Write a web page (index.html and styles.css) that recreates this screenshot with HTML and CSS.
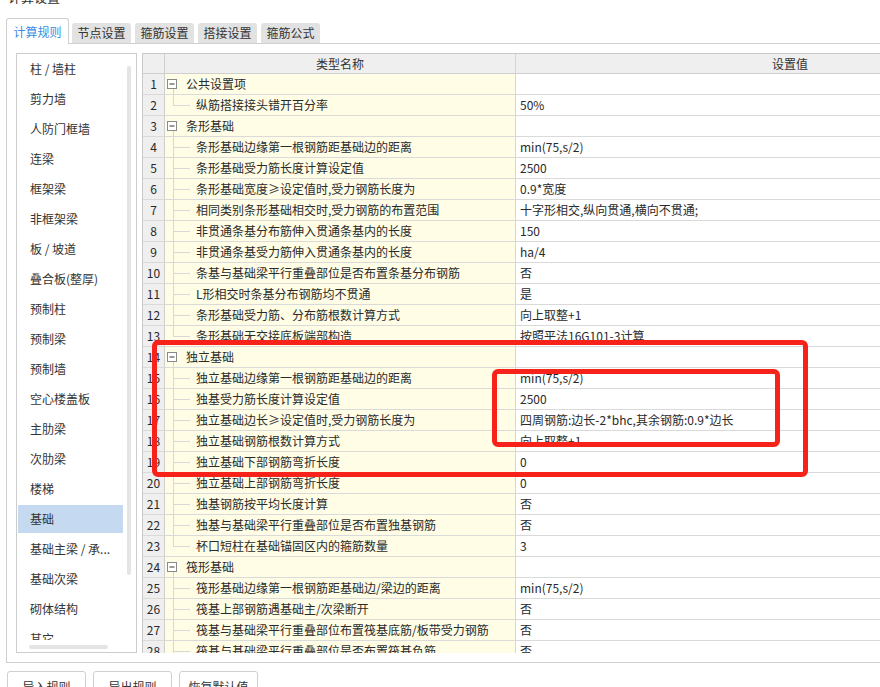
FILE: index.html
```html
<!DOCTYPE html>
<html lang="zh-CN">
<head>
<meta charset="utf-8">
<title>计算设置</title>
<link rel="stylesheet" href="styles.css">
</head>
<body>
<div class="title">计算设置</div>
<div class="tabs">
  <div class="tab active">计算规则</div>
  <div class="tab">节点设置</div>
  <div class="tab">箍筋设置</div>
  <div class="tab">搭接设置</div>
  <div class="tab">箍筋公式</div>
</div>
<div class="panel">
  <div class="listbox">
    <div class="list-main">
      <div class="items">
        <div class="item">柱 / 墙柱</div>
        <div class="item">剪力墙</div>
        <div class="item">人防门框墙</div>
        <div class="item">连梁</div>
        <div class="item">框架梁</div>
        <div class="item">非框架梁</div>
        <div class="item">板 / 坡道</div>
        <div class="item">叠合板(整厚)</div>
        <div class="item">预制柱</div>
        <div class="item">预制梁</div>
        <div class="item">预制墙</div>
        <div class="item">空心楼盖板</div>
        <div class="item">主肋梁</div>
        <div class="item">次肋梁</div>
        <div class="item">楼梯</div>
        <div class="item selected">基础</div>
        <div class="item">基础主梁 / 承...</div>
        <div class="item">基础次梁</div>
        <div class="item">砌体结构</div>
        <div class="item">其它</div>
      </div>
      <div class="vscroll"><div class="vthumb"></div></div>
    </div>
    <div class="hscroll"><div class="hthumb"></div></div>
  </div>
  <div class="grid">
    <div class="row head">
      <div class="c-num"></div>
      <div class="c-name center">类型名称</div>
      <div class="c-val center">设置值</div>
    </div>
    <div class="row"><div class="c-num">1</div><div class="c-name group"><svg class="box" width="10" height="10" viewBox="0 0 10 10"><rect x="0.5" y="0.5" width="9" height="9" fill="#fff" stroke="#8a8a8a"/><line x1="2.5" y1="5" x2="7.5" y2="5" stroke="#333"/></svg>公共设置项</div><div class="c-val"></div></div>
    <div class="row"><div class="c-num">2</div><div class="c-name child last">纵筋搭接接头错开百分率</div><div class="c-val">50%</div></div>
    <div class="row"><div class="c-num">3</div><div class="c-name group"><svg class="box" width="10" height="10" viewBox="0 0 10 10"><rect x="0.5" y="0.5" width="9" height="9" fill="#fff" stroke="#8a8a8a"/><line x1="2.5" y1="5" x2="7.5" y2="5" stroke="#333"/></svg>条形基础</div><div class="c-val"></div></div>
    <div class="row"><div class="c-num">4</div><div class="c-name child">条形基础边缘第一根钢筋距基础边的距离</div><div class="c-val">min(75,s/2)</div></div>
    <div class="row"><div class="c-num">5</div><div class="c-name child">条形基础受力筋长度计算设定值</div><div class="c-val">2500</div></div>
    <div class="row"><div class="c-num">6</div><div class="c-name child">条形基础宽度≥设定值时,受力钢筋长度为</div><div class="c-val">0.9*宽度</div></div>
    <div class="row"><div class="c-num">7</div><div class="c-name child">相同类别条形基础相交时,受力钢筋的布置范围</div><div class="c-val">十字形相交,纵向贯通,横向不贯通;</div></div>
    <div class="row"><div class="c-num">8</div><div class="c-name child">非贯通条基分布筋伸入贯通条基内的长度</div><div class="c-val">150</div></div>
    <div class="row"><div class="c-num">9</div><div class="c-name child">非贯通条基受力筋伸入贯通条基内的长度</div><div class="c-val">ha/4</div></div>
    <div class="row"><div class="c-num">10</div><div class="c-name child">条基与基础梁平行重叠部位是否布置条基分布钢筋</div><div class="c-val">否</div></div>
    <div class="row"><div class="c-num">11</div><div class="c-name child">L形相交时条基分布钢筋均不贯通</div><div class="c-val">是</div></div>
    <div class="row"><div class="c-num">12</div><div class="c-name child">条形基础受力筋、分布筋根数计算方式</div><div class="c-val">向上取整+1</div></div>
    <div class="row"><div class="c-num">13</div><div class="c-name child last">条形基础无交接底板端部构造</div><div class="c-val">按照平法16G101-3计算</div></div>
    <div class="row"><div class="c-num">14</div><div class="c-name group"><svg class="box" width="10" height="10" viewBox="0 0 10 10"><rect x="0.5" y="0.5" width="9" height="9" fill="#fff" stroke="#8a8a8a"/><line x1="2.5" y1="5" x2="7.5" y2="5" stroke="#333"/></svg>独立基础</div><div class="c-val"></div></div>
    <div class="row"><div class="c-num">15</div><div class="c-name child">独立基础边缘第一根钢筋距基础边的距离</div><div class="c-val">min(75,s/2)</div></div>
    <div class="row"><div class="c-num">16</div><div class="c-name child">独基受力筋长度计算设定值</div><div class="c-val">2500</div></div>
    <div class="row"><div class="c-num">17</div><div class="c-name child">独立基础边长≥设定值时,受力钢筋长度为</div><div class="c-val">四周钢筋:边长-2*bhc,其余钢筋:0.9*边长</div></div>
    <div class="row"><div class="c-num">18</div><div class="c-name child">独立基础钢筋根数计算方式</div><div class="c-val">向上取整+1</div></div>
    <div class="row"><div class="c-num">19</div><div class="c-name child">独立基础下部钢筋弯折长度</div><div class="c-val">0</div></div>
    <div class="row"><div class="c-num">20</div><div class="c-name child">独立基础上部钢筋弯折长度</div><div class="c-val">0</div></div>
    <div class="row"><div class="c-num">21</div><div class="c-name child">独基钢筋按平均长度计算</div><div class="c-val">否</div></div>
    <div class="row"><div class="c-num">22</div><div class="c-name child">独基与基础梁平行重叠部位是否布置独基钢筋</div><div class="c-val">否</div></div>
    <div class="row"><div class="c-num">23</div><div class="c-name child last">杯口短柱在基础锚固区内的箍筋数量</div><div class="c-val">3</div></div>
    <div class="row"><div class="c-num">24</div><div class="c-name group"><svg class="box" width="10" height="10" viewBox="0 0 10 10"><rect x="0.5" y="0.5" width="9" height="9" fill="#fff" stroke="#8a8a8a"/><line x1="2.5" y1="5" x2="7.5" y2="5" stroke="#333"/></svg>筏形基础</div><div class="c-val"></div></div>
    <div class="row"><div class="c-num">25</div><div class="c-name child">筏形基础边缘第一根钢筋距基础边/梁边的距离</div><div class="c-val">min(75,s/2)</div></div>
    <div class="row"><div class="c-num">26</div><div class="c-name child">筏基上部钢筋遇基础主/次梁断开</div><div class="c-val">否</div></div>
    <div class="row"><div class="c-num">27</div><div class="c-name child">筏基与基础梁平行重叠部位布置筏基底筋/板带受力钢筋</div><div class="c-val">否</div></div>
    <div class="row"><div class="c-num">28</div><div class="c-name child">筏基与基础梁平行重叠部位是否布置筏基负筋</div><div class="c-val">否</div></div>
  </div>
</div>
<div class="buttons">
  <div class="btn">导入规则</div>
  <div class="btn">导出规则</div>
  <div class="btn">恢复默认值</div>
</div>
<div class="mark mark-outer"></div>
<div class="mark mark-inner"></div>
</body>
</html>
```
FILE: styles.css
```css
html, body {
  margin: 0;
  padding: 0;
}
body {
  width: 880px;
  height: 687px;
  overflow: hidden;
  position: relative;
  background: #fff;
  font-family: "Noto Sans CJK SC", "Microsoft YaHei", sans-serif;
  font-size: 12px;
  color: #333;
}
.title {
  font-size: 13px;
  line-height: 18px;
  height: 18px;
  margin-top: -12px;
  padding-left: 8px;
  color: #333;
}
.tabs {
  display: flex;
  align-items: flex-end;
  height: 25px;
  margin-top: 12px;
  padding-left: 6px;
  gap: 4px;
  position: relative;
  z-index: 2;
}
.tab {
  width: 59px;
  height: 20px;
  line-height: 20px;
  text-align: center;
  background: #e2e2e2;
  border-radius: 3px 3px 0 0;
  color: #333;
}
.tab.active {
  width: 61px;
  height: 25px;
  line-height: 25px;
  margin-bottom: -1px;
  margin-right: -1px;
  background: #fff;
  border: 1px solid #cfcfcf;
  border-bottom: none;
  color: #3b8de0;
}
.panel {
  margin-left: 6px;
  width: 1000px;
  border: 1px solid #cfcfcf;
  padding: 9px 0 9px 9px;
  display: flex;
  gap: 5px;
  height: 600px;
}
.listbox {
  width: 119px;
  height: 598px;
  border: 1px solid #cdcdcd;
  display: flex;
  flex-direction: column;
  flex: none;
}
.list-main {
  display: flex;
  height: 586px;
  overflow: hidden;
}
.items {
  width: 106px;
  padding-top: 1px;
  overflow: hidden;
}
.item {
  height: 28px;
  line-height: 28px;
  margin: 0 0 2px 1px;
  padding-left: 12px;
  white-space: nowrap;
  color: #333;
}
.item.selected {
  background: #c5daf0;
}
.vscroll {
  flex: 1;
  padding: 12px 0 0 4px;
}
.vthumb {
  width: 4px;
  height: 509px;
  border-radius: 2px;
  background: #e4e4e4;
}
.hscroll {
  height: 12px;
  padding: 5px 0 0 12px;
  box-sizing: border-box;
}
.hthumb {
  width: 79px;
  height: 4px;
  border-radius: 2px;
  background: #e4e4e4;
}
.grid {
  flex: none;
  width: 930px;
  height: 599px;
  overflow: hidden;
  border-top: 1px solid #c9c9c9;
  border-left: 1px solid #c9c9c9;
}
.row {
  display: flex;
  height: 21px;
  border-bottom: 1px solid #dadada;
  box-sizing: border-box;
  line-height: 20px;
  white-space: nowrap;
  color: #2a2a2a;
}
.row.head {
  height: 20px;
  line-height: 19px;
  background: #efefef;
  border-bottom-color: #cfcfcf;
  color: #333;
}
.c-num {
  width: 22px;
  flex: none;
  box-sizing: border-box;
  border-right: 1px solid #cfcfcf;
  background: #efefef;
  text-align: center;
}
.c-name {
  width: 351px;
  flex: none;
  box-sizing: border-box;
  border-right: 1px solid #d6d6d6;
  background: #fffde6;
  overflow: hidden;
}
.head .c-name {
  background: #efefef;
}
.c-val {
  width: 548px;
  flex: none;
  box-sizing: border-box;
  padding-left: 4px;
  background: #fff;
}
.head .c-val {
  background: #efefef;
  padding-left: 0;
}
.center {
  text-align: center;
}
.c-name.group {
  display: flex;
  align-items: center;
  padding-left: 2px;
  background:
    linear-gradient(#d4d4d4, #d4d4d4) 8px 15px / 1px 6px no-repeat,
    #fffde6;
}
.box {
  flex: none;
  margin-right: 9px;
  margin-top: -1px;
}
.c-name.child {
  padding-left: 31px;
  background:
    linear-gradient(#d8d8d8, #d8d8d8) 8px 0 / 1px 100% no-repeat,
    linear-gradient(#d8d8d8, #d8d8d8) 8px 10px / 17px 1px no-repeat,
    #fffde6;
}
.c-name.child.last {
  background:
    linear-gradient(#d8d8d8, #d8d8d8) 8px 0 / 1px 10px no-repeat,
    linear-gradient(#d8d8d8, #d8d8d8) 8px 10px / 17px 1px no-repeat,
    #fffde6;
}
.buttons {
  display: flex;
  gap: 7px;
  margin-top: 8px;
  padding-left: 7px;
}
.btn {
  width: 77px;
  height: 30px;
  line-height: 30px;
  text-align: center;
  border: 1px solid #cfcfcf;
  border-radius: 3px;
  background: #fff;
  color: #333;
}
.mark {
  position: absolute;
  box-sizing: border-box;
  border: 5px solid #f7231a;
  border-radius: 6px;
  z-index: 5;
}
.mark-outer {
  left: 152px;
  top: 340px;
  width: 656px;
  height: 137px;
}
.mark-inner {
  left: 492px;
  top: 369px;
  width: 288px;
  height: 78px;
}
```
